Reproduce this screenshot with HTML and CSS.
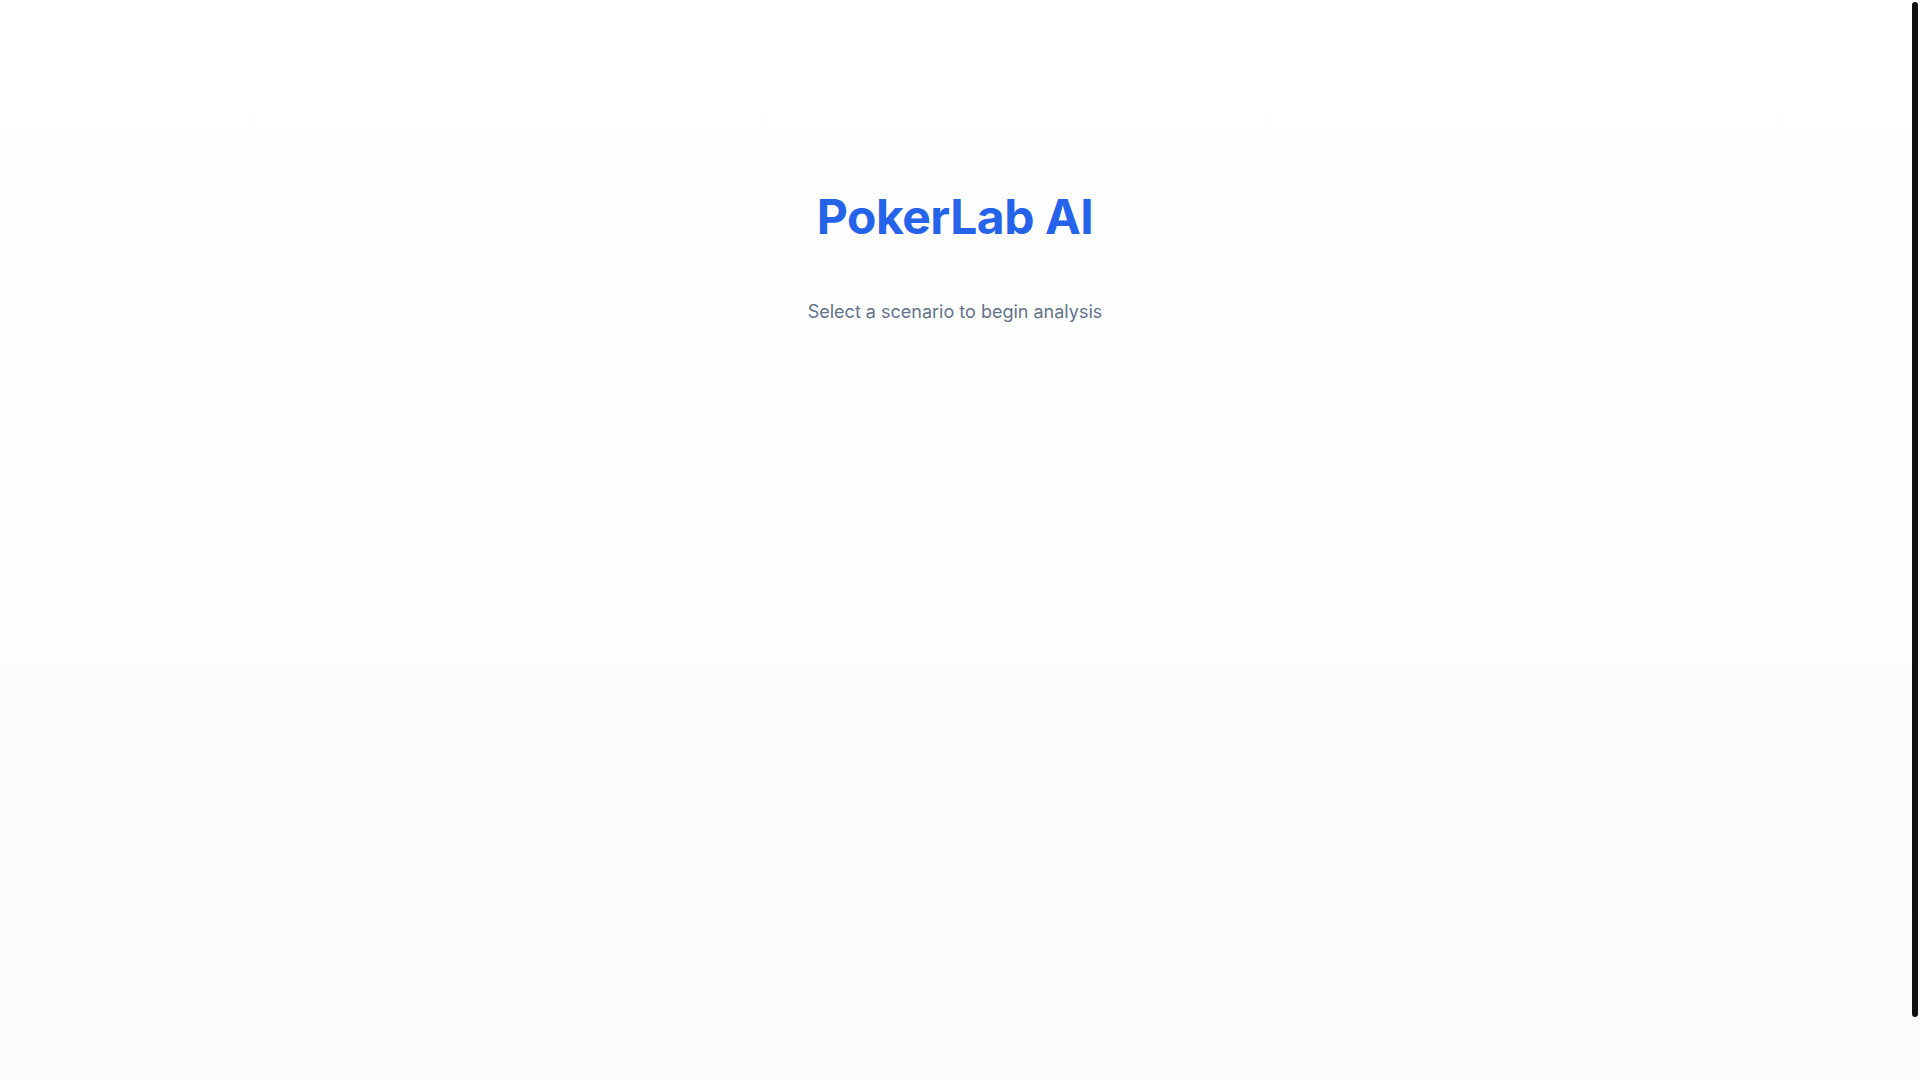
FILE: index.html
```html
<!DOCTYPE html>
<html lang="en">
<head>
<meta charset="utf-8">
<title>PokerLab AI</title>
<link rel="stylesheet" href="styles.css">
</head>
<body>
  <main class="page">
    <header class="intro">
      <h1 class="intro-title">PokerLab AI</h1>
      <p class="intro-sub">Select a scenario to begin analysis</p>
    </header>
  </main>
  <div class="scroll-rail" aria-hidden="true"><div class="scroll-thumb"></div></div>
</body>
</html>
```

FILE: styles.css
```css
html, body {
  margin: 0;
  padding: 0;
}

body {
  font-family: Inter, "Noto Sans", "Liberation Sans", sans-serif;
  background: linear-gradient(to bottom, #ffffff, #fafbfc);
  color: #0f172a;
}

/* thin dark scrollbar */
::-webkit-scrollbar {
  width: 0;
}

.scroll-rail {
  position: fixed;
  top: 0;
  right: 0;
  width: 10px;
  height: 100vh;
}

.scroll-thumb {
  position: absolute;
  top: 2px;
  left: 2px;
  width: 6px;
  height: 1015px;
  background: #111111;
  border-radius: 3px;
}

.page {
  min-height: 100vh;
  padding: 35px 34px 35px 24px;
}

.intro {
  padding-top: 158px;
  display: flex;
  flex-direction: column;
  align-items: center;
  text-align: center;
}

.intro-title {
  margin: 0;
  font-size: 48px;
  line-height: 1;
  font-weight: 700;
  letter-spacing: -0.01em;
  color: #2563eb;
}

.intro-sub {
  margin: 57px 0 0;
  font-size: 18px;
  line-height: 28px;
  color: #64748b;
}
```
